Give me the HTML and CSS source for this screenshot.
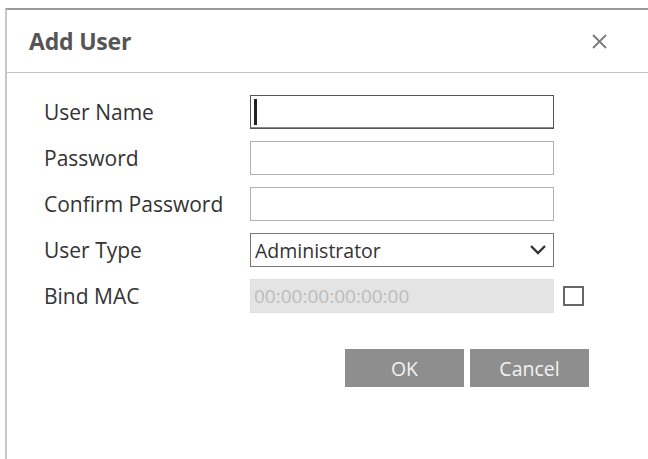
FILE: index.html
```html
<!doctype html>
<html lang="en-US">

<head>
	<title>Add User</title>
	<link rel="stylesheet" href="styles.css">
</head>

<body>
	<div class="dialog">
		<div class="dialog-head">
			<span class="dialog-title">Add User</span>
			<svg class="dialog-close" width="17" height="17" viewBox="0 0 17 17">
				<path d="M2 2 L15 15 M15 2 L2 15" stroke="#7a7a7a" stroke-width="1.8" fill="none"/>
			</svg>
		</div>

		<div class="dialog-body">
			<div class="form">
				<label class="label">User Name</label>
				<div class="field field-focus"><span class="caret"></span></div>
				<span></span>

				<label class="label">Password</label>
				<div class="field"></div>
				<span></span>

				<label class="label">Confirm Password</label>
				<div class="field"></div>
				<span></span>

				<label class="label">User Type</label>
				<div class="field field-select">
					<span>Administrator</span>
					<svg class="chevron" width="18" height="12" viewBox="0 0 18 12">
						<polyline points="2,2 9,9 16,2" fill="none" stroke="#333" stroke-width="2.4"/>
					</svg>
				</div>
				<span></span>

				<label class="label">Bind MAC</label>
				<div class="field field-disabled">00:00:00:00:00:00</div>
				<span class="check"></span>
			</div>

			<div class="buttons">
				<button class="btn">OK</button>
				<button class="btn">Cancel</button>
			</div>
		</div>
	</div>
</body>
</html>
```

FILE: styles.css
```css
body {
	margin: 0;
	background: #fff;
	font-family: "Open Sans", "Liberation Sans", sans-serif;
	height: 459px;
	overflow: hidden;
}

.dialog {
	margin: 8px 0 0 5px;
	border-top: 2px solid #9a9a9a;
	border-left: 2px solid #c8c8c8;
	height: 460px;
}

.dialog-head {
	height: 62px;
	border-bottom: 1px solid #c4c4c4;
	display: flex;
	align-items: center;
	justify-content: space-between;
	padding: 0 40px 0 22px;
}

.dialog-title {
	font-size: 23px;
	font-weight: 700;
	color: #555;
	letter-spacing: -0.2px;
}

.dialog-body {
	padding: 22px 0 0 37px;
}

.form {
	display: grid;
	grid-template-columns: 197px 304px 21px;
	column-gap: 9px;
	row-gap: 12px;
	align-items: center;
}

.label {
	font-size: 21px;
	color: #333;
}

.field {
	height: 34px;
	box-sizing: border-box;
	border: 1px solid #b0b0b0;
	background: #fff;
	display: flex;
	align-items: center;
	padding: 0 4px;
	font-size: 19.5px;
	color: #333;
}

.field-focus {
	border-color: #555;
	box-shadow: inset 0 -1px 0 #888;
	padding-left: 3px;
}

.caret {
	width: 3px;
	height: 26px;
	background: #222;
}

.field-select {
	border-color: #777;
	justify-content: space-between;
	padding-right: 6px;
}

.field-disabled {
	background: #e4e4e4;
	border-color: #e0e0e0;
	color: #bdbdbd;
	font-size: 19px;
	padding-left: 3px;
}

.check {
	width: 21px;
	height: 20px;
	box-sizing: border-box;
	border: 2px solid #666;
	background: #fff;
}

.buttons {
	display: flex;
	gap: 6px;
	margin: 36px 0 0 301px;
}

.btn {
	width: 119px;
	height: 38px;
	border: none;
	background: #8e8e8e;
	color: #f2f2f2;
	font-family: "Open Sans", "Liberation Sans", sans-serif;
	font-size: 19.5px;
}
```
